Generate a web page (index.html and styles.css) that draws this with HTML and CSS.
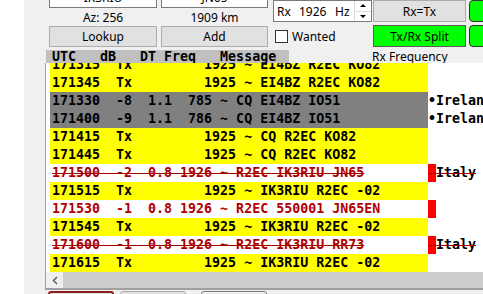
FILE: index.html
```html
<html>
  <head>
    <link rel="stylesheet" href="styles.css">
  </head>
  <body>
    <div class="gutter"></div>
    <div class="panel">
      <div class="top">
        <div class="col call c1">
          <div class="edit">IK3RIU</div>
          <div class="info">Az: 256</div>
          <div class="btn">Lookup</div>
        </div>
        <div class="col call c2">
          <div class="edit">JN65</div>
          <div class="info">1909 km</div>
          <div class="btn">Add</div>
        </div>
        <div class="col c3">
          <div class="spin">
            <span class="sp-pre">Rx</span><span class="sp-val">1926</span><span class="sp-suf">Hz</span>
            <span class="sp-btns"><span class="sp-half"><i class="up"></i></span><span class="sp-half"><i class="dn"></i></span></span>
          </div>
          <div class="check"><span class="box"></span><span class="check-label">Wanted</span></div>
        </div>
        <div class="col c4">
          <div class="btn tall">Rx=Tx</div>
          <div class="btn tall split">Tx/Rx Split</div>
        </div>
        <div class="col c5">
          <div class="go"></div>
          <div class="go"></div>
        </div>
      </div>

      <div class="head">
        <div class="cols">UTC   dB   DT Freq   Message</div>
        <div class="rxf">Rx Frequency</div>
      </div>

      <div class="frame">
        <div class="list">
          <div class="rows">
            <div class="row yel"><span class="txt">171315  Tx         1925 ~ EI4BZ R2EC KO82</span></div>
            <div class="row yel"><span class="txt">171345  Tx         1925 ~ EI4BZ R2EC KO82</span></div>
            <div class="row gry"><span class="txt">171330  -8  1.1  785 ~ CQ EI4BZ IO51</span><span class="note">•Ireland</span></div>
            <div class="row gry"><span class="txt">171400  -9  1.1  786 ~ CQ EI4BZ IO51</span><span class="note">•Ireland</span></div>
            <div class="row yel"><span class="txt">171415  Tx         1925 ~ CQ R2EC KO82</span></div>
            <div class="row yel"><span class="txt">171445  Tx         1925 ~ CQ R2EC KO82</span></div>
            <div class="row red strike"><span class="txt">171500  -2  0.8 1926 ~ R2EC IK3RIU JN65</span><span class="flag"> </span><span class="note">Italy</span></div>
            <div class="row yel"><span class="txt">171515  Tx         1925 ~ IK3RIU R2EC -02</span></div>
            <div class="row red"><span class="txt">171530  -1  0.8 1926 ~ R2EC 550001 JN65EN</span><span class="flag"> </span></div>
            <div class="row yel"><span class="txt">171545  Tx         1925 ~ IK3RIU R2EC -02</span></div>
            <div class="row red strike"><span class="txt">171600  -1  0.8 1926 ~ R2EC IK3RIU RR73</span><span class="flag"> </span><span class="note">Italy</span></div>
            <div class="row yel"><span class="txt">171615  Tx         1925 ~ IK3RIU R2EC -02</span></div>
          </div>
        </div>
        <div class="hbar">
          <div class="arrow">
            <svg width="6" height="9" viewBox="0 0 6 9"><path d="M5 1 L1.5 4.5 L5 8" fill="none" stroke="#606060" stroke-width="1.5"/></svg>
          </div>
          <div class="thumb"></div>
        </div>
      </div>

      <div class="bottom">
        <div class="tab stop"></div>
        <div class="tab"></div>
        <div class="tab dark"></div>
      </div>
    </div>
  </body>
</html>
```

FILE: styles.css
```css
* { box-sizing: border-box; }

body {
  margin: 0;
  width: 483px;
  height: 294px;
  overflow: hidden;
  display: flex;
  background-color: #f0f0f0;
  font-family: "Noto Sans", sans-serif;
  font-size: 12px;
  color: #000;
}

.gutter { width: 24px; flex: none; background-color: #fff; }

.panel {
  flex: 1;
  min-width: 0;
  display: flex;
  flex-direction: column;
  overflow: hidden;
}

/* top controls */
.top {
  display: flex;
  align-items: flex-start;
  height: 50px;
  flex: none;
  padding-left: 25px;
}

.col { display: flex; flex-direction: column; flex: none; }
.col.call { margin-top: -13px; }
.c1 { width: 108px; }
.c2 { width: 107px; margin-left: 4px; }
.c3 { width: 99px; margin-left: 5px; gap: 3px; }
.c4 { width: 93px; margin-left: 1px; gap: 3px; }
.c5 { width: 40px; margin-left: 3px; gap: 3px; }

.edit {
  height: 21px;
  background-color: #fff;
  border: 1px solid #7a7a7a;
  display: flex;
  align-items: center;
  justify-content: center;
}

.info {
  height: 18px;
  display: flex;
  align-items: center;
  justify-content: center;
}

.btn {
  height: 21px;
  background-color: #e1e1e1;
  border: 1px solid #adadad;
  display: flex;
  align-items: center;
  justify-content: center;
}
.btn.tall { height: 22px; }
.btn.split { background-color: #00ff00; border-color: #5a5a5a; }

.go {
  height: 22px;
  background-color: #00ff00;
  border: 1px solid #333;
  border-radius: 4px;
}

.spin {
  height: 22px;
  background-color: #fff;
  border: 1px solid #7a7a7a;
  display: flex;
  align-items: center;
  padding-left: 3px;
}
.sp-pre { width: 22px; }
.sp-val { width: 36px; }
.sp-suf { width: 16px; }
.sp-btns {
  margin-left: auto;
  width: 17px;
  height: 100%;
  display: flex;
  flex-direction: column;
  border-left: 1px solid #dadada;
}
.sp-half {
  flex: 1;
  display: flex;
  align-items: center;
  justify-content: center;
}
.sp-half + .sp-half { border-top: 1px solid #dadada; }
.up { border-left: 3px solid transparent; border-right: 3px solid transparent; border-bottom: 3px solid #000; }
.dn { border-left: 3px solid transparent; border-right: 3px solid transparent; border-top: 3px solid #000; }

.check {
  height: 22px;
  display: flex;
  align-items: center;
  padding-left: 2px;
}
.box {
  width: 13px;
  height: 13px;
  background-color: #fff;
  border: 1px solid #333;
}
.check-label { margin-left: 4px; }

/* list header */
.head { display: flex; height: 13px; flex: none; }
.cols {
  margin-left: 22px;
  width: 243px;
  height: 13px;
  overflow: hidden;
  background-color: #c0c0c0;
  padding-left: 6px;
  font-family: "DejaVu Sans Mono", monospace;
  font-weight: bold;
  font-size: 13.3px;
  line-height: 13px;
  white-space: pre;
}
.rxf { margin-left: 83px; line-height: 14px; }

/* decode list */
.frame {
  margin-left: 21px;
  height: 227px;
  flex: none;
  display: flex;
  flex-direction: column;
  border-left: 1px solid #a0a0a0;
  border-bottom: 2px solid #a0a0a0;
}

.list {
  flex: 1;
  overflow: hidden;
  background-color: #fff;
  padding-left: 4px;
  font-family: "DejaVu Sans Mono", monospace;
  font-weight: bold;
  font-size: 13.3px;
}
.rows { margin-top: -7px; }

.row { display: flex; height: 18px; line-height: 18px; white-space: pre; }
.txt { width: 378px; flex: none; padding-left: 2px; }
.yel .txt { background-color: #ffff00; }
.gry .txt { background-color: #808080; }
.red { color: #b00000; }
.flag { width: 8px; flex: none; background-color: #ff0000; }
.note { color: #000; }
.strike .txt, .strike .flag, .strike .note {
  text-decoration: line-through;
  text-decoration-color: #a00000;
  text-decoration-thickness: 1px;
}

.hbar { height: 16px; flex: none; display: flex; }
.arrow {
  width: 17px;
  background-color: #f0f0f0;
  display: flex;
  align-items: center;
  justify-content: center;
}
.thumb { flex: 1; background-color: #cdcdcd; }

/* buttons below */
.bottom { display: flex; gap: 6px; margin-top: 1px; padding-left: 24px; flex: none; }
.tab {
  width: 66px;
  height: 10px;
  background-color: #e1e1e1;
  border: 1px solid #adadad;
  border-radius: 3px 3px 0 0;
}
.tab.stop { border: 2px solid #8c2020; }
.tab.dark { margin-left: 9px; border-color: #7a7a7a; background-color: #f0f0f0; }
```
